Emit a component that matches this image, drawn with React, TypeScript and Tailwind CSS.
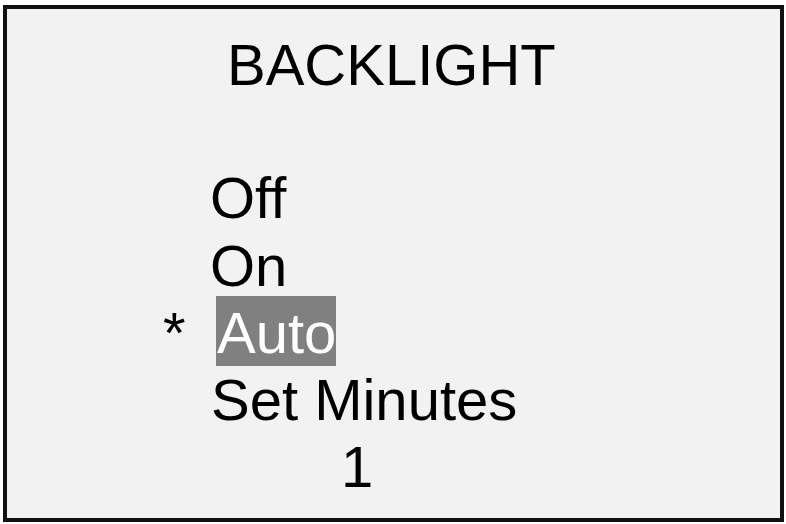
import React from "react";

export default function App() {
  return (
    <div
      className="w-[786px] h-[524px] bg-white pt-[5px] pl-[3px] [font-variant-ligatures:none]"
      style={{ fontFamily: '"Liberation Sans", Arial, sans-serif' }}
    >
      <div className="w-[781px] h-[517px] border-4 border-[#111111] bg-[#f2f2f2] text-black text-[58px] leading-[67.25px]">
        <div className="mt-[22px] pl-[220px]">BACKLIGHT</div>
        <div className="mt-[66px]">
          <div className="flex pl-[203px]">Off</div>
          <div className="flex pl-[203px]">On</div>
          <div className="flex pl-[156px]">
            <span className="w-[53px]">*</span>
            <span>
              <span className="bg-[#808080] text-white pt-[4px] pb-px pl-px">Auto</span>
            </span>
          </div>
          <div className="flex pl-[204px]">Set Minutes</div>
          <div className="flex pl-[334px]">1</div>
        </div>
      </div>
    </div>
  );
}
